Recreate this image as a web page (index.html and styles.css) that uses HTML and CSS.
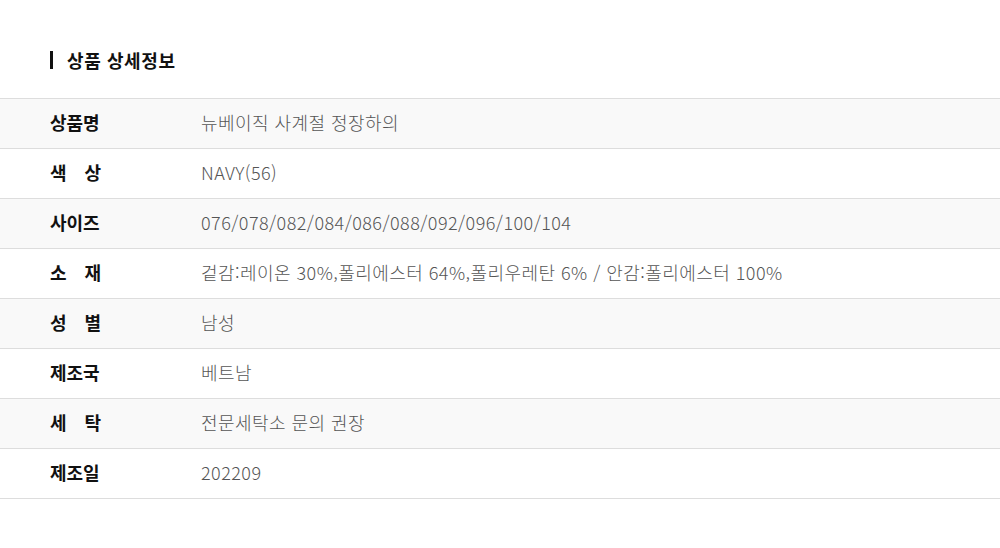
FILE: index.html
```html
<!DOCTYPE html>
<html lang="ko">
<head>
<meta charset="utf-8">
<link rel="stylesheet" href="styles.css">
</head>
<body>
<section class="detail">
  <h2 class="title">상품 상세정보</h2>
  <div class="table">
    <div class="row alt"><div class="label">상품명</div><div class="value">뉴베이직 사계절 정장하의</div></div>
    <div class="row"><div class="label">색 상</div><div class="value">NAVY(56)</div></div>
    <div class="row alt"><div class="label">사이즈</div><div class="value">076/078/082/084/086/088/092/096/100/104</div></div>
    <div class="row"><div class="label">소 재</div><div class="value">겉감:레이온 30%,폴리에스터 64%,폴리우레탄 6% / 안감:폴리에스터 100%</div></div>
    <div class="row alt"><div class="label">성 별</div><div class="value">남성</div></div>
    <div class="row"><div class="label">제조국</div><div class="value">베트남</div></div>
    <div class="row alt"><div class="label">세 탁</div><div class="value">전문세탁소 문의 권장</div></div>
    <div class="row"><div class="label">제조일</div><div class="value">202209</div></div>
  </div>
</section>
</body>
</html>
```

FILE: styles.css
```css
html, body {
  margin: 0;
  padding: 0;
  background: #fff;
}
body {
  font-family: "Noto Sans CJK KR", "Noto Sans", sans-serif;
  color: #222;
}
.detail {
  padding-top: 51px;
}
.title {
  margin: 0 0 29px 50px;
  padding-left: 14px;
  border-left: 3px solid #111;
  font-size: 18px;
  font-weight: 700;
  line-height: 18px;
  height: 18px;
  display: flex;
  align-items: center;
  color: #111;
  letter-spacing: 0.6px;
}
.table {
  border-top: 1px solid #ddd;
}
.row {
  display: flex;
  align-items: center;
  height: 46px;
  padding-bottom: 3px;
  border-bottom: 1px solid #ddd;
}
.row.alt {
  background: #f9f9f9;
}
.label {
  width: 51px;
  margin-left: 50px;
  font-size: 18px;
  font-weight: 700;
  color: #111;
  text-align: justify;
  text-align-last: justify;
}
.value {
  margin-left: 100px;
  font-size: 18px;
  font-weight: 300;
  color: #555;
  letter-spacing: 0.45px;
}
```
